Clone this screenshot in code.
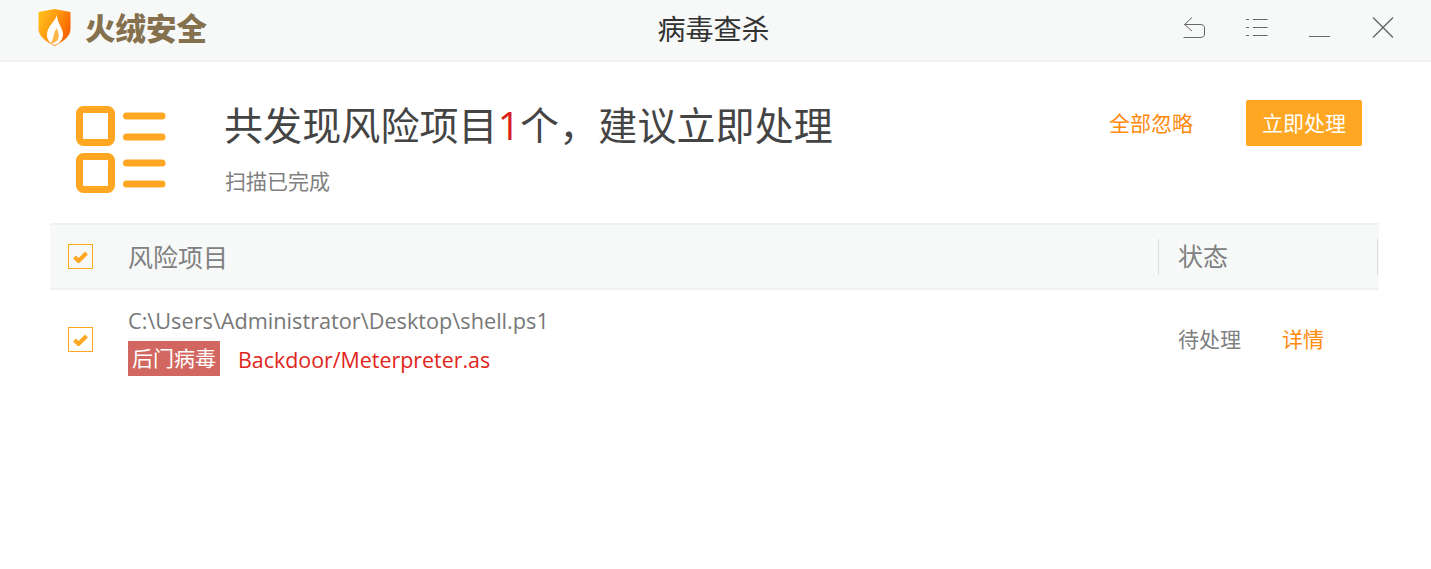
<div class="app">
	<header class="titlebar">
		<div class="brand">
			<svg class="logo" width="33" height="37" viewBox="0 0 33 37">
				<defs>
					<linearGradient id="shield" x1="0" y1="0" x2="1" y2="0.5">
						<stop offset="0" stop-color="#ffc41c" />
						<stop offset="0.5" stop-color="#ff9c12" />
						<stop offset="1" stop-color="#fa6400" />
					</linearGradient>
				</defs>
				<path d="M0.500 3 L16.500 0 L32.500 3 V20 C32.500 28 24 33 16.500 37 C9 33 0.500 28 0.500 20 Z" fill="url(#shield)" />
				<path d="M19 6 C17 13 9 17 9 26 C9 31 12 34 16 36 C21 35 25 31 25 25 C25 19 19 14 19 6 Z" fill="#fff" />
				<path d="M19 19 C20 24 22 27 19.500 31 C18 33.500 14 35 12 34.500 C16.500 32 14 25 19 19 Z" fill="#ffb54a" />
			</svg>
			<span class="brand-name">火绒安全</span>
		</div>
		<div class="page-title">病毒查杀</div>
		<div class="win-actions">
			<svg width="22" height="22" viewBox="0 0 22 22" fill="none" stroke="#666" stroke-width="1">
				<path d="M9 0.500 L1.500 7.500 L9 14" />
				<path d="M1.500 7.500 H17 Q21.500 7.500 21.500 11 V17 Q21.500 20.500 17 20.500 H0.500" />
			</svg>
			<svg width="22" height="22" viewBox="0 0 22 22" fill="none" stroke="#666" stroke-width="1">
				<path d="M0 2.500 H3 M7 2.500 H21.500 M0 10.500 H3 M7 10.500 H21.500 M0 18.500 H3 M7 18.500 H21.500" />
			</svg>
			<svg width="22" height="22" viewBox="0 0 22 22" fill="none" stroke="#666" stroke-width="1">
				<path d="M0 19.500 H21" />
			</svg>
			<svg width="22" height="22" viewBox="0 0 22 22" fill="none" stroke="#666" stroke-width="1.400">
				<path d="M1 0.500 L21 20.500 M21 0.500 L1 20.500" />
			</svg>
		</div>
	</header>

	<section class="summary">
		<svg class="summary-icon" width="90" height="88" viewBox="0 0 90 88" fill="none" stroke="#ffa722">
			<rect x="3.500" y="3.500" width="32" height="33" rx="4" stroke-width="7" />
			<rect x="3.500" y="50.500" width="32" height="33" rx="4" stroke-width="7" />
			<path d="M50.500 10 H86 M50.500 31 H86 M50.500 57 H86 M50.500 78 H86" stroke-width="7" stroke-linecap="round" />
		</svg>
		<div class="summary-text">
			<h1>共发现风险项目<em>1</em>个，建议立即处理</h1>
			<p>扫描已完成</p>
		</div>
		<div class="summary-actions">
			<button class="link">全部忽略</button>
			<button class="primary">立即处理</button>
		</div>
	</section>

	<section class="table">
		<div class="thead">
			<span class="check">
				<svg width="15" height="12" viewBox="0 0 15 12" fill="none" stroke="#ffa722" stroke-width="4"><path d="M1.500 6 L5.500 10 L13.500 2" /></svg>
			</span>
			<span class="col-name">风险项目</span>
			<span class="col-status">状态</span>
		</div>
		<div class="row">
			<span class="check">
				<svg width="15" height="12" viewBox="0 0 15 12" fill="none" stroke="#ffa722" stroke-width="4"><path d="M1.500 6 L5.500 10 L13.500 2" /></svg>
			</span>
			<div class="item">
				<div class="path">C:\Users\Administrator\Desktop\shell.ps1</div>
				<div class="threat">
					<span class="tag">后门病毒</span>
					<span class="threat-name">Backdoor/Meterpreter.as</span>
				</div>
			</div>
			<span class="state">待处理</span>
			<span class="detail">详情</span>
		</div>
	</section>
</div>

<style>
	:global(body) {
		margin: 0;
		background: #fff;
	}

	.app {
		height: 569px;
		overflow: hidden;
		font-family: "Open Sans", "Noto Sans CJK SC", sans-serif;
		color: #777;
	}

	.titlebar {
		height: 60px;
		display: grid;
		grid-template-columns: 1fr auto 1fr;
		align-items: center;
		background: #f7f9f9;
		border-bottom: 2px solid #f0f1f1;
		padding: 0 37px 0 38px;
	}

	.brand {
		display: flex;
		align-items: center;
		gap: 14px;
	}

	.logo {
		margin-bottom: 6px;
	}

	.brand-name {
		font-size: 30.500px;
		line-height: 40px;
		font-weight: 900;
		color: #85714e;
		padding-bottom: 4px;
	}

	.page-title {
		font-size: 28px;
		color: #333;
		margin-right: 5px;
		padding-bottom: 4px;
	}

	.win-actions {
		display: flex;
		justify-content: flex-end;
		align-items: center;
		gap: 41px;
		padding-bottom: 4px;
	}

	.summary {
		height: 161px;
		display: flex;
		padding: 0 69px 0 76px;
		box-sizing: border-box;
	}

	.summary-icon {
		margin-top: 44px;
	}

	.summary-text {
		margin-left: 58px;
	}

	h1 {
		margin: 35px 0 0;
		font-size: 39px;
		line-height: 56px;
		font-weight: 400;
		color: #444;
		letter-spacing: 0.100px;
	}

	h1 em {
		font-style: normal;
		color: #d9201b;
	}

	.summary-text p {
		margin: 13px 0 0 1px;
		font-size: 21px;
		line-height: 30px;
		color: #808080;
	}

	.summary-actions {
		margin-left: auto;
		margin-top: 38px;
		display: flex;
		align-items: flex-start;
		gap: 53px;
	}

	button {
		font: inherit;
		font-size: 21px;
		border: none;
		padding: 0 0 3px;
	}

	.link {
		height: 46px;
		background: none;
		color: #ff8a0e;
	}

	.primary {
		width: 116px;
		height: 46px;
		border-radius: 2px;
		background: #ffa722;
		color: #fff;
	}

	.table {
		margin: 0 52px 0 50px;
	}

	.thead {
		height: 63px;
		display: flex;
		align-items: center;
		padding-left: 18px;
		background: #f7f9f9;
		border-top: 2px solid #f0f1f1;
		border-bottom: 2px solid #f0f1f1;
		font-size: 25px;
		color: #808080;
	}

	.check {
		flex: none;
		width: 25px;
		height: 25px;
		box-sizing: border-box;
		border: 1px solid #ffa722;
		display: flex;
		align-items: center;
		justify-content: center;
	}

	.col-name {
		margin-left: 35px;
		flex: 1;
		padding-bottom: 2px;
	}

	.col-status {
		width: 199px;
		height: 36px;
		line-height: 35px;
		padding-left: 19px;
		margin-right: 1px;
		border-left: 1px solid #ddd;
		border-right: 1px solid #ddd;
	}

	.row {
		display: flex;
		align-items: center;
		padding: 15px 0 0 18px;
	}

	.row .check {
		margin-bottom: 2px;
	}

	.item {
		margin-left: 35px;
		flex: 1;
	}

	.path {
		font-size: 21.700px;
		line-height: 32px;
		color: #777;
	}

	.threat {
		margin-top: 4px;
		display: flex;
		align-items: center;
		gap: 18px;
	}

	.tag {
		width: 92px;
		height: 35px;
		line-height: 35px;
		text-align: center;
		background: #d26660;
		color: #fff;
		font-size: 21px;
	}

	.threat-name {
		font-size: 21.400px;
		color: #e1251b;
		padding-top: 2px;
	}

	.state {
		width: 104px;
		font-size: 21px;
		color: #808080;
		padding-bottom: 6px;
	}

	.detail {
		width: 97px;
		font-size: 21px;
		color: #ff8a0e;
		padding-bottom: 6px;
	}
</style>
